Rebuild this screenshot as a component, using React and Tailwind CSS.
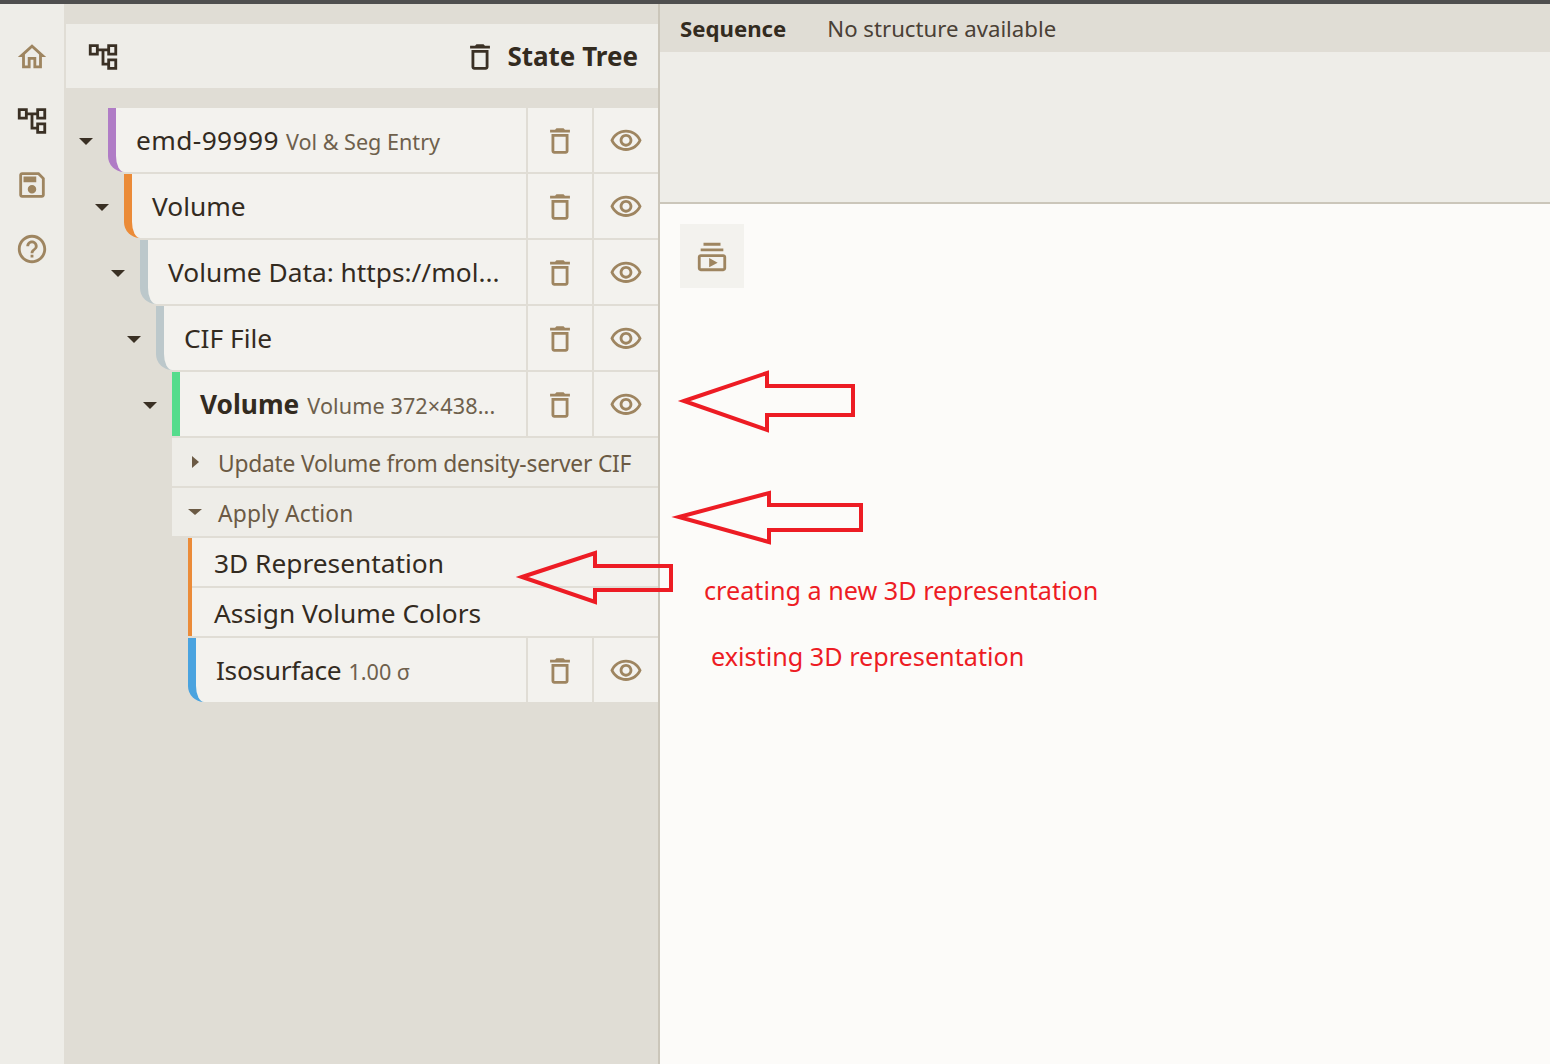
const ICONS = {
  home: 'M12 5.69l5 4.5V18h-2v-6H9v6H7v-7.81l5-4.5M12 3L2 12h3v8h6v-6h2v6h6v-8h3L12 3z',
  tree: 'M22 11V3h-7v3H9V3H2v8h7V8h2v10h4v3h7v-8h-7v3h-2V8h2v3h7zM7 9H4V5h3v4zm10 6h3v4h-3v-4zm0-10h3v4h-3V5z',
  save: 'M17 3H5c-1.11 0-2 .9-2 2v14c0 1.1.89 2 2 2h14c1.1 0 2-.9 2-2V7l-4-4zm2 16H5V5h11.17L19 7.83V19zm-7-7c-1.66 0-3 1.34-3 3s1.34 3 3 3 3-1.34 3-3-1.34-3-3-3zM6 6h9v4H6z',
  help: 'M11 18h2v-2h-2v2zm1-16C6.48 2 2 6.48 2 12s4.48 10 10 10 10-4.48 10-10S17.52 2 12 2zm0 18c-4.41 0-8-3.59-8-8s3.59-8 8-8 8 3.59 8 8-3.59 8-8 8zm0-14c-2.21 0-4 1.79-4 4h2c0-1.1.9-2 2-2s2 .9 2 2c0 2-3 1.75-3 5h2c0-2.25 3-2.5 3-5 0-2.21-1.79-4-4-4z',
  trash: 'M6 19c0 1.1.9 2 2 2h8c1.1 0 2-.9 2-2V7H6v12zM8 9h8v10H8V9zm7.5-5l-1-1h-5l-1 1H5v2h14V4z',
  eye: 'M12 6c3.79 0 7.17 2.13 8.82 5.5C19.17 14.87 15.79 17 12 17s-7.17-2.13-8.82-5.5C4.83 8.13 8.21 6 12 6m0-2C7 4 2.73 7.11 1 11.5 2.73 15.89 7 19 12 19s9.27-3.11 11-7.5C21.27 7.11 17 4 12 4zm0 5c1.38 0 2.5 1.12 2.5 2.5S13.38 14 12 14s-2.5-1.12-2.5-2.5S10.62 9 12 9m0-2c-2.48 0-4.5 2.02-4.5 4.5S9.52 16 12 16s4.5-2.02 4.5-4.5S14.48 7 12 7z',
  play: 'M20 8H4V6h16v2zm-2-6H6v2h12V2zm4 10v8c0 1.1-.9 2-2 2H4c-1.1 0-2-.9-2-2v-8c0-1.1.9-2 2-2h16c1.1 0 2 .9 2 2zm-2 0H4v8h16v-8zm-10 .73v6.53L16 16l-6-3.27z',
};

function Icon({ name, className = 'text-[#9e8560]' }) {
  return (
    <svg viewBox="0 0 24 24" fill="currentColor" className={`w-[34px] h-[34px] shrink-0 ${className}`}>
      <path d={ICONS[name]} />
    </svg>
  );
}

function Caret({ className = '' }) {
  return <div className={`w-0 h-0 border-x-[7px] border-x-transparent border-t-[7px] border-t-[#3a3024] ${className}`} />;
}

function IconCell({ name }) {
  return (
    <button className="w-16 h-16 shrink-0 ml-0.5 pt-0.5 bg-[#f3f2ee] flex items-center justify-center">
      <Icon name={name} />
    </button>
  );
}

function TreeRow({ indent, bar, rounded = true, caret = true, children }) {
  return (
    <div className={`flex h-16 mb-0.5 ${indent}`}>
      {caret && (
        <div className="w-0 relative">
          <Caret className="absolute -left-[29px] top-[30px]" />
        </div>
      )}
      <div className={`flex-1 min-w-0 border-l-8 ${bar} ${rounded ? 'rounded-bl-2xl' : ''} bg-[#f3f2ee] pl-5 pt-0.5 flex items-center text-[26.3px] text-[#332b1f] whitespace-nowrap overflow-hidden`}>
        {children}
      </div>
      <IconCell name="trash" />
      <IconCell name="eye" />
    </div>
  );
}

function Sub({ children }) {
  return <span className="ml-[7px] text-[21.6px] text-[#6e604c] translate-y-px">{children}</span>;
}

function ActionHeader({ open, children }) {
  return (
    <div className="h-12 mb-0.5 pt-1 bg-[#eeede8] flex items-center text-[22.8px] text-[#6b5a44] whitespace-nowrap">
      <div className="w-[46px] shrink-0 flex justify-center -mt-1">
        {open ? (
          <div className="w-0 h-0 border-x-[7px] border-x-transparent border-t-[6px] border-t-[#6b5a44]" />
        ) : (
          <div className="w-0 h-0 border-y-[6px] border-y-transparent border-l-[7px] border-l-[#6b5a44]" />
        )}
      </div>
      {children}
    </div>
  );
}

function ActionItem({ children }) {
  return (
    <div className="h-12 pl-[22px] pt-1 bg-[#f3f2ee] flex items-center text-[26.3px] text-[#332b1f] whitespace-nowrap">
      {children}
    </div>
  );
}

export default function App() {
  return (
    <div className="relative h-[1064px] overflow-hidden bg-[#fcfbf9] font-['Noto_Sans',sans-serif]">
      <div className="h-1 bg-[#4f4f4f]" />
      <div className="flex h-[1060px]">
        {/* left nav */}
        <div className="w-[66px] shrink-0 bg-[#eeede8] border-r-2 border-[#e0ddd5] flex flex-col items-center pt-9 gap-[30px]">
          <Icon name="home" />
          <Icon name="tree" className="text-[#3a3024]" />
          <Icon name="save" />
          <Icon name="help" />
        </div>

        {/* state tree panel */}
        <div className="w-[594px] shrink-0 bg-[#e0ddd5] border-r-2 border-[#cbc6ba] pt-5">
          <div className="h-16 bg-[#eeede8] flex items-center pl-5 pr-5">
            <Icon name="tree" className="text-[#3a3024] mt-0.5" />
            <Icon name="trash" className="text-[#3a3024] ml-auto mt-0.5" />
            <span className="ml-2.5 text-[26px] font-bold text-[#332b1f]">State Tree</span>
          </div>
          <div className="pt-5">
            <TreeRow indent="pl-[42px]" bar="border-[#b07cc6]">
              <span className="tracking-[0.4px]">emd-99999</span><Sub>Vol &amp; Seg Entry</Sub>
            </TreeRow>
            <TreeRow indent="pl-[58px]" bar="border-[#eb8b38]">Volume</TreeRow>
            <TreeRow indent="pl-[74px]" bar="border-[#bcc8cb]">Volume Data: https://mol...</TreeRow>
            <TreeRow indent="pl-[90px]" bar="border-[#bcc8cb]">CIF File</TreeRow>
            <TreeRow indent="pl-[106px]" bar="border-[#55dc8c]" rounded={false}>
              <span className="font-bold">Volume</span><Sub><span className="ml-px tracking-[0.1px]">Volume 372×438...</span></Sub>
            </TreeRow>
            <div className="pl-[106px]">
              <ActionHeader><span className="tracking-[-0.22px]">Update Volume from density-server CIF</span></ActionHeader>
              <ActionHeader open><span className="tracking-[0.17px]">Apply Action</span></ActionHeader>
              <div className="ml-4 border-l-4 border-[#eb8b38] mb-0.5 flex flex-col gap-0.5 bg-[#e0ddd5]">
                <ActionItem>3D Representation</ActionItem>
                <ActionItem>Assign Volume Colors</ActionItem>
              </div>
            </div>
            <TreeRow indent="pl-[122px]" bar="border-[#4aa3df]" caret={false}>
              <span className="tracking-[-0.3px]">Isosurface</span><Sub>1.00 σ</Sub>
            </TreeRow>
          </div>
        </div>

        {/* right side */}
        <div className="flex-1 min-w-0 flex flex-col">
          <div className="h-12 shrink-0 pt-0.5 bg-[#e0ddd5] flex items-center pl-5 text-[22.2px] text-[#332b1f]">
            <span className="font-bold">Sequence</span>
            <span className="ml-[41px] text-[#4a4035]">No structure available</span>
          </div>
          <div className="h-[152px] shrink-0 bg-[#eeede8] border-b-2 border-[#cbc6ba]" />
          <div className="flex-1 p-5">
            <button className="w-16 h-16 pt-0.5 bg-[#f3f2ee] flex items-center justify-center">
              <Icon name="play" />
            </button>
          </div>
        </div>
      </div>

      {/* red annotations drawn on top of the screenshot */}
      <svg className="absolute inset-0 w-[1550px] h-[1064px] pointer-events-none" viewBox="0 0 1550 1064" fill="none" stroke="#ed1c24" strokeWidth="4">
        <polygon points="684,401 767,373 767,386 853,386 853,415 767,415 767,430" />
        <polygon points="679,517 769,493 769,505 861,505 861,530 769,530 769,542" />
        <polygon points="522,577 595,553 595,566 671,566 671,590 595,590 595,602" />
      </svg>
      <div className="absolute left-[704px] top-[572px] text-[25.2px] text-[#ed1c24] whitespace-nowrap">creating a new 3D representation</div>
      <div className="absolute left-[711px] top-[638px] text-[25.2px] text-[#ed1c24] whitespace-nowrap">existing 3D representation</div>
    </div>
  );
}
